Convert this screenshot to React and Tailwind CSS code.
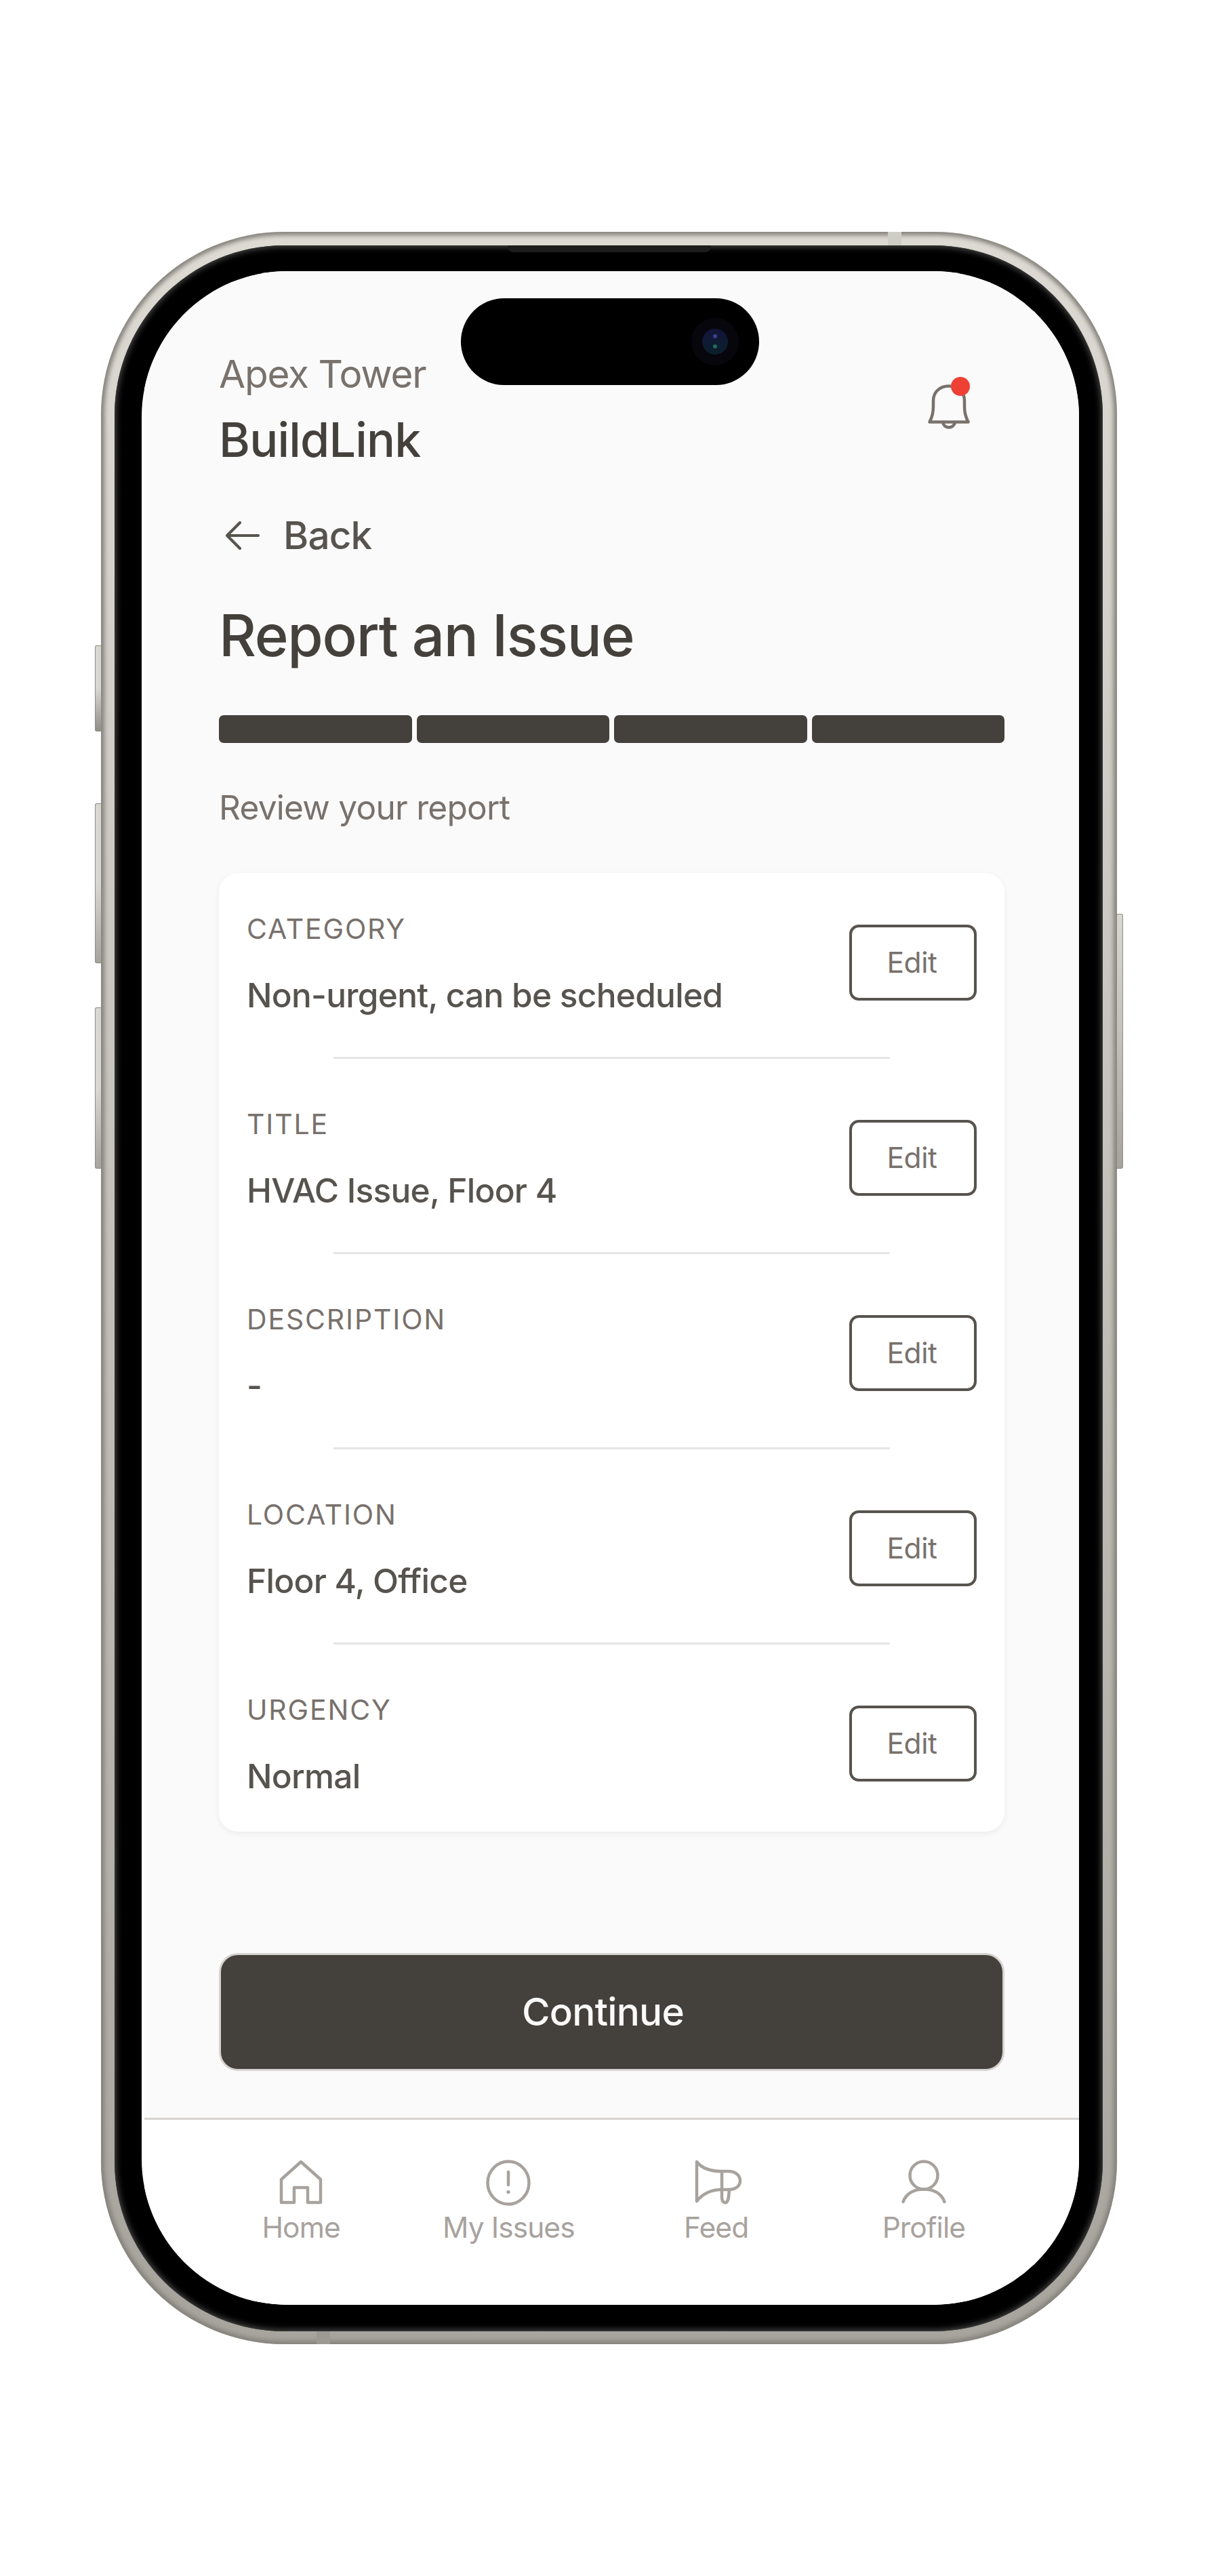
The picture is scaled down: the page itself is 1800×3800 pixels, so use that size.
import React from 'react';

const rows = [
  { label: 'CATEGORY', value: 'Non-urgent, can be scheduled' },
  { label: 'TITLE', value: 'HVAC Issue, Floor 4' },
  { label: 'DESCRIPTION', value: '-' },
  { label: 'LOCATION', value: 'Floor 4, Office' },
  { label: 'URGENCY', value: 'Normal' },
];

function HomeIcon() {
  return (
    <svg width="64" height="66" viewBox="0 0 64 66" fill="none" stroke="#a8a29e" strokeWidth="4.5" strokeLinejoin="round" strokeLinecap="round">
      <path d="M32 3 L61 29 V63 H42 V41 H22 V63 H3 V29 Z" />
    </svg>
  );
}

function IssuesIcon() {
  return (
    <svg width="66" height="68" viewBox="0 0 66 68" fill="none" stroke="#a8a29e" strokeWidth="4.5" strokeLinecap="round">
      <ellipse cx="33" cy="34" rx="30.5" ry="31.5" />
      <path d="M33 18 V37" />
      <circle cx="33" cy="47.5" r="2.6" fill="#a8a29e" stroke="none" />
    </svg>
  );
}

function FeedIcon() {
  return (
    <svg className="ml-[6px]" width="70" height="66" viewBox="0 0 70 66" fill="none" stroke="#a8a29e" strokeWidth="4.5" strokeLinejoin="round" strokeLinecap="round">
      <path d="M3 3 C10 12 22 17 40 17 H50 C60 17 67 23 67 31 C67 39 60 44 50 44 H40 C24 44 12 50 3 61 Z" />
      <path d="M40 17 V56 C40 61 43 64 46 63 C49 62 50 58 51 44" />
    </svg>
  );
}

function ProfileIcon() {
  return (
    <svg width="66" height="66" viewBox="0 0 66 66" fill="none" stroke="#a8a29e" strokeWidth="4.5" strokeLinecap="round">
      <circle cx="33" cy="23" r="20.5" />
      <path d="M2.5 62 C7 50 18 43.5 33 43.5 C48 43.5 59 50 63.5 62" />
    </svg>
  );
}

const navItems = [
  { label: 'Home', Icon: HomeIcon },
  { label: 'My Issues', Icon: IssuesIcon },
  { label: 'Feed', Icon: FeedIcon },
  { label: 'Profile', Icon: ProfileIcon },
];

function Bell() {
  return (
    <div className="relative w-[62px] h-[66px] mt-[51px] mr-[51px]">
      <svg width="62" height="66" viewBox="0 0 62 66" fill="none" stroke="#78716c" strokeWidth="4.5" strokeLinejoin="round" strokeLinecap="round">
        <path d="M2.5 55.5 C6.5 48 8 42 8 33 V24 C8 11 18 2.5 31 2.5 C44 2.5 54 11 54 24 V33 C54 42 55.5 48 59.5 55.5 Z" />
        <path d="M22 56 C23 61 27 63.5 31 63.5 C35 63.5 39 61 40 56" />
      </svg>
      <span className="absolute left-[34px] top-[-11px] w-[28px] h-[28px] rounded-full bg-[#ee4035]" />
    </div>
  );
}

function ReviewRow({ label, value, last }) {
  return (
    <>
      <div className="flex justify-between items-start pl-[41px] pr-[41px]">
        <div>
          <div className="text-[41px] leading-[57px] tracking-[0.045em] text-[#78716c]">{label}</div>
          <div className="mt-[34px] text-[49.6px] leading-[71px] tracking-[-0.015em] font-[450] text-[#57534e]">{value}</div>
        </div>
        <button className="mt-[22px] w-[188px] h-[112px] pr-[3px] rounded-[14px] border-4 border-[#57534e] bg-white text-[42.5px] tracking-[-0.01em] font-[420] text-[#78716c]">
          Edit
        </button>
      </div>
      {!last && <div className="h-[3px] mx-[169px] mt-[55px] mb-[68px] bg-[#e7e5e4]" />}
    </>
  );
}

export default function App() {
  return (
    <div className="min-h-[3800px] bg-white pl-[149px] pt-[342px] font-[Inter,sans-serif]">
      {/* phone body */}
      <div className="relative w-[1499px] h-[3116px] pt-[20px] pr-[21px] pb-[19px] pl-[20px] rounded-[270px] bg-gradient-to-b from-[#dcdad2] to-[#a6a49c] shadow-[inset_0_0_6px_5px_#85837c]">
        {/* side buttons */}
        <div className="absolute left-[-9px] top-[610px] w-[9px] h-[127px] rounded-l-[3px] border border-r-0 border-[#8f8d86] bg-gradient-to-b from-[#d9d8d0] via-[#d9d8d0] to-[#8f8d86]" />
        <div className="absolute left-[-9px] top-[843px] w-[9px] h-[236px] rounded-l-[3px] border border-r-0 border-[#8f8d86] bg-gradient-to-b from-[#d9d8d0] via-[#d9d8d0] to-[#a5a39c]" />
        <div className="absolute left-[-9px] top-[1144px] w-[9px] h-[238px] rounded-l-[3px] border border-r-0 border-[#8f8d86] bg-gradient-to-b from-[#d9d8d0] via-[#d9d8d0] to-[#a5a39c]" />
        <div className="absolute right-[-9px] top-[1006px] w-[9px] h-[376px] rounded-r-[3px] border border-l-0 border-[#8f8d86] bg-gradient-to-b from-[#d9d8d0] via-[#c2c0b8] to-[#a5a39c]" />
        {/* antenna bands */}
        <div className="absolute left-[1161px] top-0 w-[20px] h-[20px] bg-[#cfcec6]" />
        <div className="absolute left-[318px] bottom-0 w-[20px] h-[19px] bg-[#9b9991]" />

        {/* bezel */}
        <div className="relative w-[1458px] h-[3077px] pt-[38px] pr-[35px] pb-[39px] pl-[40px] rounded-[250px] bg-black shadow-[inset_0_0_10px_2px_#4d4d4d]">
          <div className="absolute left-[580px] top-0 w-[300px] h-[10px] rounded-b-[8px] bg-[#1c1c1c]" />

          {/* screen */}
          <div className="relative flex flex-col w-[1383px] h-[3000px] pl-[4px] rounded-[215px] overflow-hidden bg-white">
            <div className="absolute left-[471px] top-[40px] w-[440px] h-[128px] rounded-full bg-black">
              <div className="absolute left-[340px] top-[29px] w-[70px] h-[70px] rounded-full bg-[#07060c]" />
              <div className="absolute left-[356px] top-[45px] w-[38px] h-[38px] rounded-full bg-gradient-to-b from-[#12143a] to-[#0a1f2a]" />
              <div className="absolute left-[372px] top-[53px] w-[6px] h-[6px] rounded-full bg-[#3a3f8c]" />
              <div className="absolute left-[372px] top-[68px] w-[6px] h-[6px] rounded-full bg-[#1f6b5a]" />
            </div>

            <div className="flex flex-col flex-1 pl-[110px] pr-[110px] pt-[116px] bg-[#fafafa]">
              <div className="flex justify-between items-start">
                <div>
                  <div className="text-[56.7px] leading-[72px] tracking-[-0.021em] text-[#78716c]">Apex Tower</div>
                  <div className="mt-[21px] text-[70px] leading-[80px] tracking-[-0.012em] font-medium text-[#44403c]">BuildLink</div>
                </div>
                <Bell />
              </div>

              <div className="flex items-center mt-[65px] pl-[9px] h-[71px]">
                <svg width="52" height="44" viewBox="0 0 52 44" fill="none" stroke="#57534e" strokeWidth="4.2" strokeLinecap="round" strokeLinejoin="round">
                  <path d="M49 22 H3 M22 3 L3 22 L22 41" />
                </svg>
                <span className="ml-[34px] text-[56.7px] tracking-[-0.015em] font-[450] text-[#57534e]">Back</span>
              </div>

              <h1 className="mt-[60px] text-[85px] leading-[106px] tracking-[-0.015em] font-[450] text-[#44403c]">Report an Issue</h1>

              <div className="flex gap-[7px] mt-[64px]">
                <div className="flex-1 h-[41px] rounded-[7px] bg-[#44403c]" />
                <div className="flex-1 h-[41px] rounded-[7px] bg-[#44403c]" />
                <div className="flex-1 h-[41px] rounded-[7px] bg-[#44403c]" />
                <div className="flex-1 h-[41px] rounded-[7px] bg-[#44403c]" />
              </div>

              <p className="mt-[60px] text-[49.6px] leading-[71px] tracking-[-0.015em] text-[#78716c]">Review your report</p>

              <div className="mt-[61px] pt-[54px] pb-[46px] rounded-[28px] bg-white shadow-[0_3px_10px_rgba(0,0,0,0.06)]">
                {rows.map((row, i) => (
                  <ReviewRow key={row.label} label={row.label} value={row.value} last={i === rows.length - 1} />
                ))}
              </div>

              <button className="mt-[179px] h-[174px] pr-[26px] rounded-[28px] border-[3px] border-[#d6d3d1] bg-[#44403c] text-[56.7px] tracking-[-0.013em] font-[450] text-[#fafaf9]">
                Continue
              </button>
            </div>

            {/* bottom nav */}
            <nav className="grid grid-cols-4 h-[276px] pt-[59px] pl-[78px] pr-[76px] border-t-[3px] border-[#d6d3d1] bg-white">
              {navItems.map(({ label, Icon }) => (
                <div key={label} className="flex flex-col items-center">
                  <div className="h-[68px] flex items-start">
                    <Icon />
                  </div>
                  <span className="mt-[3px] text-[42.5px] leading-[57px] tracking-[-0.022em] text-[#a8a29e]">{label}</span>
                </div>
              ))}
            </nav>
          </div>
        </div>
      </div>
    </div>
  );
}
